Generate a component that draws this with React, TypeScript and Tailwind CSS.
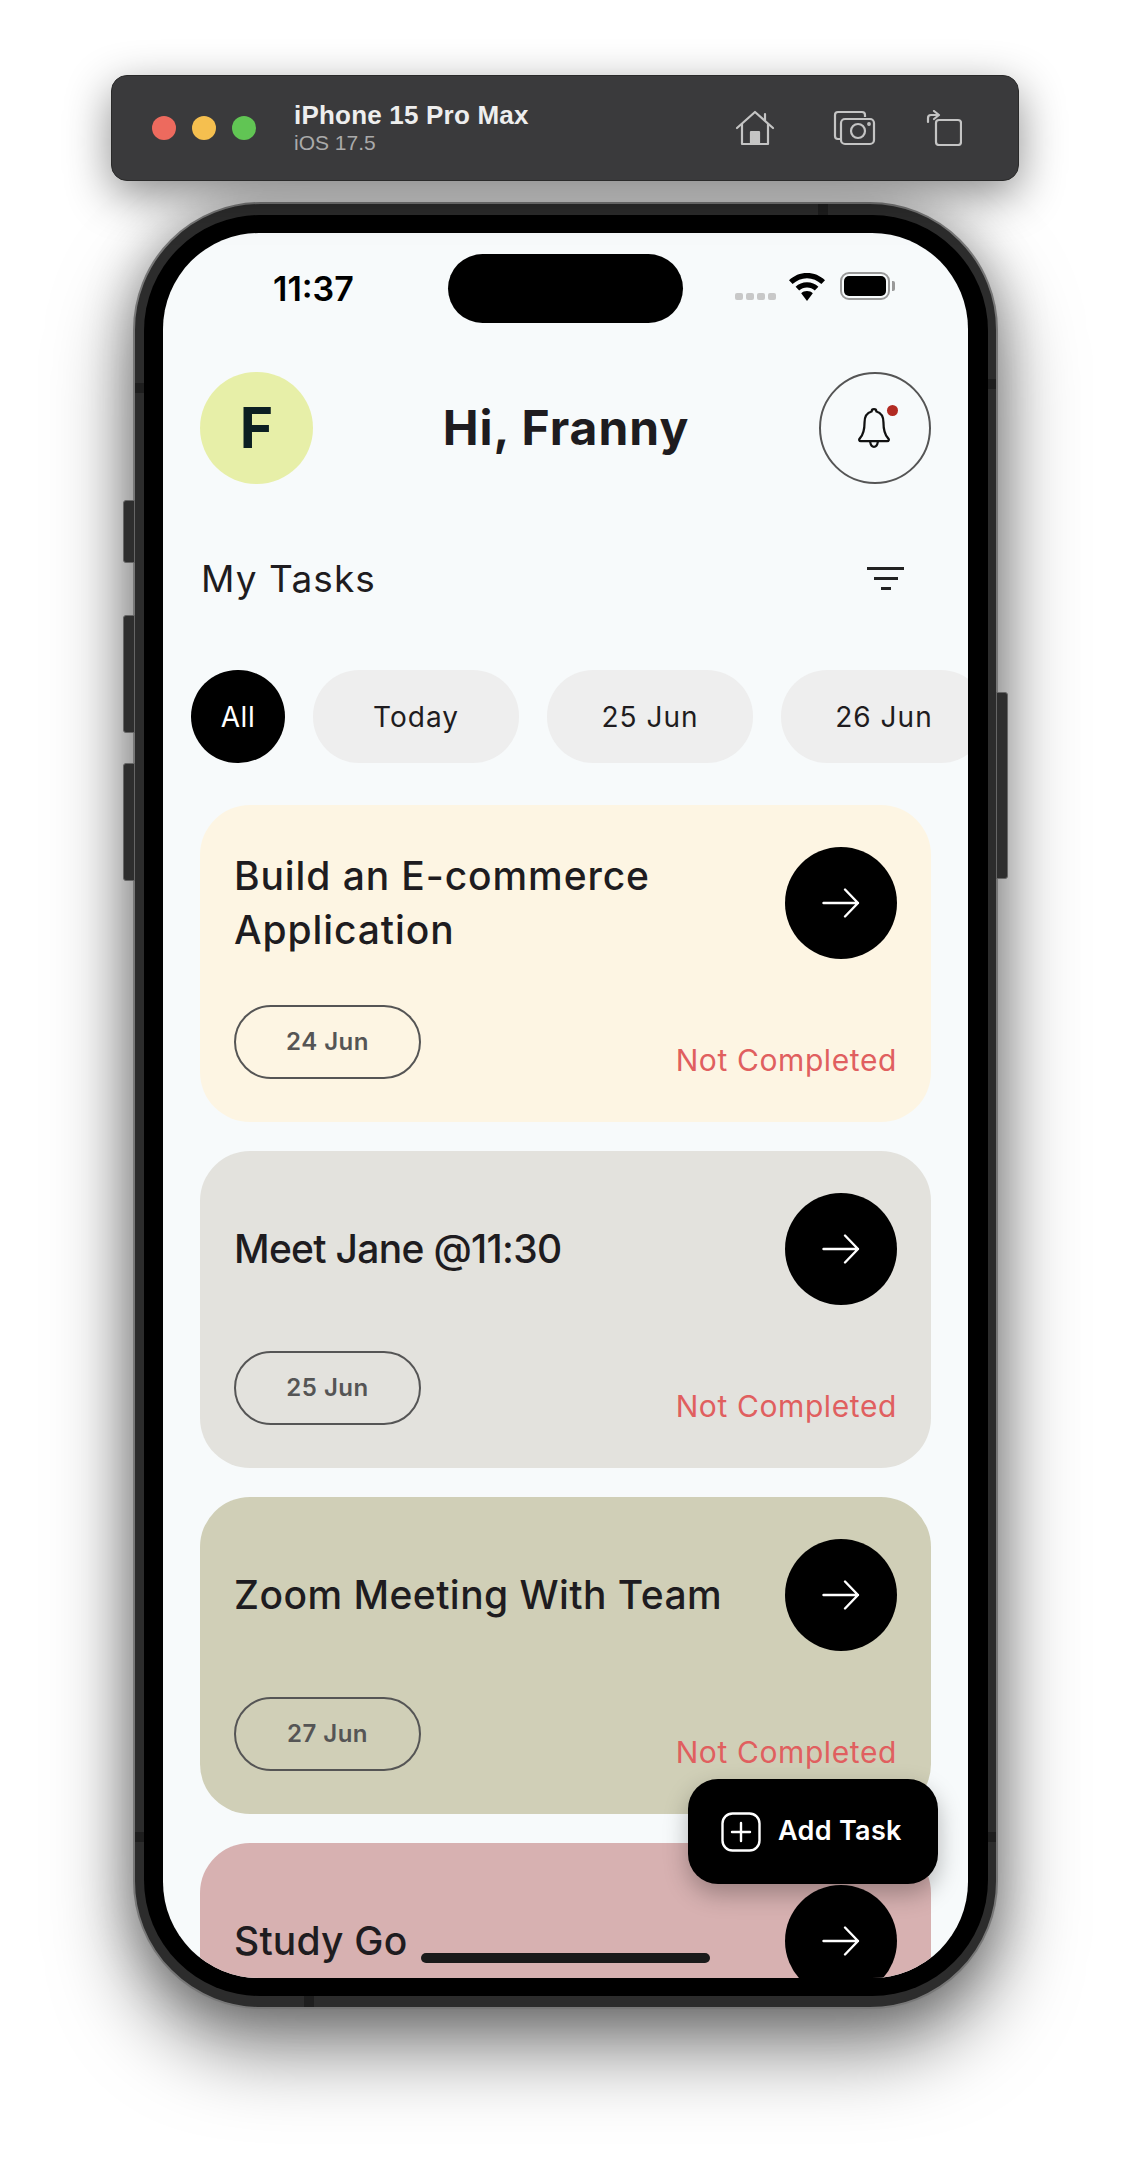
import React from "react";

function Arrow() {
  return (
    <svg width="38" height="32" viewBox="0 0 38 32" fill="none" stroke="white" strokeWidth="2.4" strokeLinecap="round" strokeLinejoin="round">
      <path d="M1.5 16H36M23 2.5 36 16 23 29.5" />
    </svg>
  );
}

const cards = [
  { title: "Build an E-commerce Application", date: "24 Jun", bg: "bg-[#fdf5e3]", t: "w-[440px] tracking-[0.9px]" },
  { title: "Meet Jane @11:30", date: "25 Jun", bg: "bg-[#e3e2dd]", t: "w-[500px] tracking-[-0.7px]" },
  { title: "Zoom Meeting With Team", date: "27 Jun", bg: "bg-[#d0cfb7]", t: "w-[520px] tracking-[0.45px]" },
  { title: "Study Go", date: "", bg: "bg-[#d7b1b1]", t: "w-[500px] tracking-[0.2px]" },
];

function Card({ c }: { c: (typeof cards)[number] }) {
  return (
    <div className={`shrink-0 h-[317px] rounded-[50px] ${c.bg} pt-[42px] pl-[34px] pr-[34px] flex flex-col`}>
      <div className="flex items-center justify-between h-[112px]">
        <div className={`${c.t} text-[39px] leading-[54px] font-medium text-[#1e1c20]`}>{c.title}</div>
        <div className="w-[112px] h-[112px] rounded-full bg-black flex items-center justify-center shrink-0">
          <Arrow />
        </div>
      </div>
      {c.date && (
        <div className="flex items-start justify-between mt-[46px]">
          <div className="w-[187px] h-[74px] rounded-full border-2 border-[#555] flex items-center justify-center text-[24px] font-semibold text-[#555] tracking-[0.5px]">
            {c.date}
          </div>
          <div className="mt-[36px] text-[30px] leading-[38px] text-[#e05f5f] tracking-[0.6px]">Not Completed</div>
        </div>
      )}
    </div>
  );
}

function Chip({ label, active }: { label: string; active?: boolean }) {
  return active ? (
    <div className="w-[94px] h-[93px] shrink-0 rounded-full bg-black text-white flex items-center justify-center text-[28px] tracking-[0.5px]">{label}</div>
  ) : (
    <div className="w-[206px] h-[93px] shrink-0 rounded-[46px] bg-[#eeeeee] text-[#1e1c20] flex items-center justify-center text-[28px] tracking-[1px]">{label}</div>
  );
}

function SideButton({ cls }: { cls: string }) {
  return <div className={`absolute w-[12px] bg-[#2e2e2e] border border-[#666] ${cls}`} />;
}

function Band({ cls }: { cls: string }) {
  return <div className={`absolute bg-[#1e1e1e] ${cls}`} />;
}

export default function App() {
  return (
    <div className="w-[1130px] h-[2160px] bg-white overflow-hidden flex flex-col items-center pt-[75px] font-['Inter',sans-serif]">
      {/* Simulator toolbar */}
      <div className="w-[908px] h-[106px] shrink-0 rounded-[16px] bg-[#3a3a3c] border border-[#2a2a2a] shadow-[0_14px_45px_rgba(0,0,0,0.45)] flex items-center pl-[40px] pr-[56px] relative z-10">
        <div className="flex gap-[16px]">
          <div className="w-[24px] h-[24px] rounded-full bg-[#ed6a5e]" />
          <div className="w-[24px] h-[24px] rounded-full bg-[#f5bf4f]" />
          <div className="w-[24px] h-[24px] rounded-full bg-[#61c554]" />
        </div>
        <div className="ml-[38px] flex flex-col font-['Liberation_Sans',sans-serif]">
          <div className="text-[26px] leading-[30px] font-bold text-[#eeeeee] tracking-[0.2px]">iPhone 15 Pro Max</div>
          <div className="text-[21px] leading-[26px] text-[#aaaaaa]">iOS 17.5</div>
        </div>
        <div className="ml-auto flex items-center text-[#c4c4c4]">
          <svg width="40" height="36" viewBox="0 0 40 36" fill="none" stroke="currentColor" strokeWidth="2.2" strokeLinejoin="round" strokeLinecap="round">
            <path d="M2 18 20 2l18 16M30 10V4M7 14V34h26V14" />
            <path d="M16 34V22h8v12" fill="currentColor" />
          </svg>
          <svg className="ml-[58px]" width="43" height="36" viewBox="0 0 43 36" fill="none" stroke="currentColor" strokeWidth="2.2" strokeLinejoin="round">
            <path d="M7 29H5a3 3 0 0 1-3-3V5a3 3 0 0 1 3-3h24a3 3 0 0 1 3 3v2" />
            <rect x="8" y="9" width="33" height="25" rx="4" />
            <circle cx="25" cy="21" r="7" />
            <circle cx="36" cy="14" r="0.8" />
          </svg>
          <svg className="ml-[50px]" width="36" height="36" viewBox="0 0 36 36" fill="none" stroke="currentColor" strokeWidth="2.2" strokeLinejoin="round" strokeLinecap="round">
            <rect x="10" y="10" width="25" height="25" rx="3" />
            <path d="M2 12V8a3 3 0 0 1 3-3h7M8 1l5 4-5 4" />
          </svg>
        </div>
      </div>

      {/* Phone */}
      <div className="relative ml-[1px] mt-[21px] w-[865px] h-[1807px] shrink-0">
        <SideButton cls="left-[-10px] top-[298px] h-[63px] rounded-l-[3px]" />
        <SideButton cls="left-[-10px] top-[413px] h-[118px] rounded-l-[3px]" />
        <SideButton cls="left-[-10px] top-[561px] h-[118px] rounded-l-[3px]" />
        <SideButton cls="right-[-10px] top-[490px] h-[187px] rounded-r-[3px]" />

        <div className="w-full h-full rounded-[128px] bg-[#2c2c2c] border-2 border-[#777] pt-[11px] pb-[11px] pl-[9px] pr-[8px] shadow-[0_40px_80px_rgba(0,0,0,0.5),0_0_50px_rgba(0,0,0,0.28)]">
          <div className="w-full h-full rounded-[116px] bg-black py-[18px] pl-[19px] pr-[20px]">
            <div className="relative w-full h-full rounded-[96px] bg-[#f7fafb] overflow-hidden flex flex-col">
              {/* Status bar */}
              <div className="h-[139px] shrink-0 relative">
                <div className="absolute left-[110px] top-[34px] text-[34px] leading-[44px] font-semibold text-black">11:37</div>
                <div className="absolute left-[285px] top-[21px] w-[235px] h-[69px] rounded-[35px] bg-black" />
                <div className="absolute left-[572px] top-[60px] flex gap-[3px]">
                  <div className="w-[8px] h-[7px] rounded-[2px] bg-[#c8c8c8]" />
                  <div className="w-[8px] h-[7px] rounded-[2px] bg-[#c8c8c8]" />
                  <div className="w-[8px] h-[7px] rounded-[2px] bg-[#c8c8c8]" />
                  <div className="w-[8px] h-[7px] rounded-[2px] bg-[#c8c8c8]" />
                </div>
                <svg className="absolute left-[626px] top-[40px]" width="36" height="28" viewBox="0 0 36 28" fill="black">
                  <path d="M18 0C11 0 5 2.6 0 7.2l3.6 3.8C7.6 7.4 12.5 5.2 18 5.2s10.4 2.2 14.4 5.8L36 7.2C31 2.6 25 0 18 0Z" />
                  <path d="M18 9.2c-4.5 0-8.4 1.7-11.4 4.5l3.6 3.7c2.1-1.9 4.8-3 7.8-3s5.7 1.1 7.8 3l3.6-3.7c-3-2.8-6.9-4.5-11.4-4.5Z" />
                  <path d="M18 18c-2.3 0-4.4.9-5.8 2.3L18 28l5.8-7.700C22.400 18.900 20.300 18 18 18Z" />
                </svg>
                <div className="absolute left-[677px] top-[39px] w-[50px] h-[28px] rounded-[9px] border-2 border-[#999] p-[2px]">
                  <div className="w-full h-full rounded-[5px] bg-black" />
                </div>
                <div className="absolute left-[729px] top-[48px] w-[3px] h-[10px] rounded-r-[2px] bg-[#999]" />
              </div>

              {/* Header */}
              <div className="h-[112px] shrink-0 px-[37px] flex items-center justify-between">
                <div className="w-[113px] h-[112px] rounded-full bg-[#e7efa8] flex items-center justify-center text-[57px] font-bold text-[#0c1f22]">F</div>
                <div className="text-[48px] font-bold text-[#1e1c20] tracking-[1px]">Hi, Franny</div>
                <div className="relative w-[112px] h-[112px] rounded-full border-2 border-[#555] flex items-center justify-center">
                  <svg className="mr-[2px]" width="34" height="44" viewBox="0 0 36 44" fill="none" stroke="#111" strokeWidth="2.4" strokeLinejoin="round" strokeLinecap="round">
                    <path d="M18 2c-1.500 0-2.500 1-2.500 2.500C10 6 8 10.500 8 16c0 8-1 13-5 17-1.500 1.500-.5 3 1 3h28c1.500 0 2.500-1.500 1-3-4-4-5-9-5-17 0-5.500-2-10-7.500-11.500C20.500 3 19.500 2 18 2Z" />
                    <path d="M14 37c.5 3 2 5 4 5s3.500-2 4-5" />
                  </svg>
                  <div className="absolute left-[66px] top-[31px] w-[11px] h-[11px] rounded-full bg-[#b22a22]" />
                </div>
              </div>

              {/* My Tasks */}
              <div className="h-[85px] mt-[52px] shrink-0 pl-[38px] pr-[64px] flex items-center justify-between">
                <div className="text-[37px] text-[#1e1c20] tracking-[1.1px]">My Tasks</div>
                <div className="flex flex-col items-center gap-[7px]">
                  <div className="w-[37px] h-[3px] bg-[#222]" />
                  <div className="w-[24px] h-[3px] bg-[#222]" />
                  <div className="w-[10px] h-[3px] bg-[#222]" />
                </div>
              </div>

              {/* Chips */}
              <div className="mt-[49px] shrink-0 pl-[28px] flex gap-[28px] overflow-hidden">
                <Chip label="All" active />
                <Chip label="Today" />
                <Chip label="25 Jun" />
                <Chip label="26 Jun" />
              </div>

              {/* Cards */}
              <div className="mt-[42px] px-[37px] flex flex-col gap-[29px]">
                {cards.map((c) => (
                  <Card key={c.title} c={c} />
                ))}
              </div>

              {/* Floating button */}
              <div className="absolute left-[525px] top-[1546px] w-[250px] h-[105px] rounded-[30px] bg-black shadow-[0_10px_24px_rgba(0,0,0,0.28)] flex items-center pl-[33px] gap-[17px]">
                <svg width="40" height="40" viewBox="0 0 40 40" fill="none" stroke="white" strokeWidth="2.400" strokeLinecap="round">
                  <rect x="1.500" y="1.500" width="37" height="37" rx="10" />
                  <path d="M20 11v18M11 20h18" />
                </svg>
                <div className="text-[27px] font-semibold text-white tracking-[0.3px]">Add Task</div>
              </div>

              {/* Home indicator */}
              <div className="absolute left-[258px] top-[1720px] w-[289px] h-[10px] rounded-full bg-[#1a1a1a]" />
            </div>
          </div>
        </div>
        <Band cls="left-[685px] top-[2px] w-[10px] h-[11px]" />
        <Band cls="left-[171px] bottom-[2px] w-[10px] h-[11px]" />
        <Band cls="left-[2px] top-[181px] w-[9px] h-[10px]" />
        <Band cls="right-[2px] top-[177px] w-[8px] h-[10px]" />
        <Band cls="left-[2px] bottom-[167px] w-[9px] h-[10px]" />
        <Band cls="right-[2px] bottom-[167px] w-[8px] h-[10px]" />
      </div>
    </div>
  );
}
